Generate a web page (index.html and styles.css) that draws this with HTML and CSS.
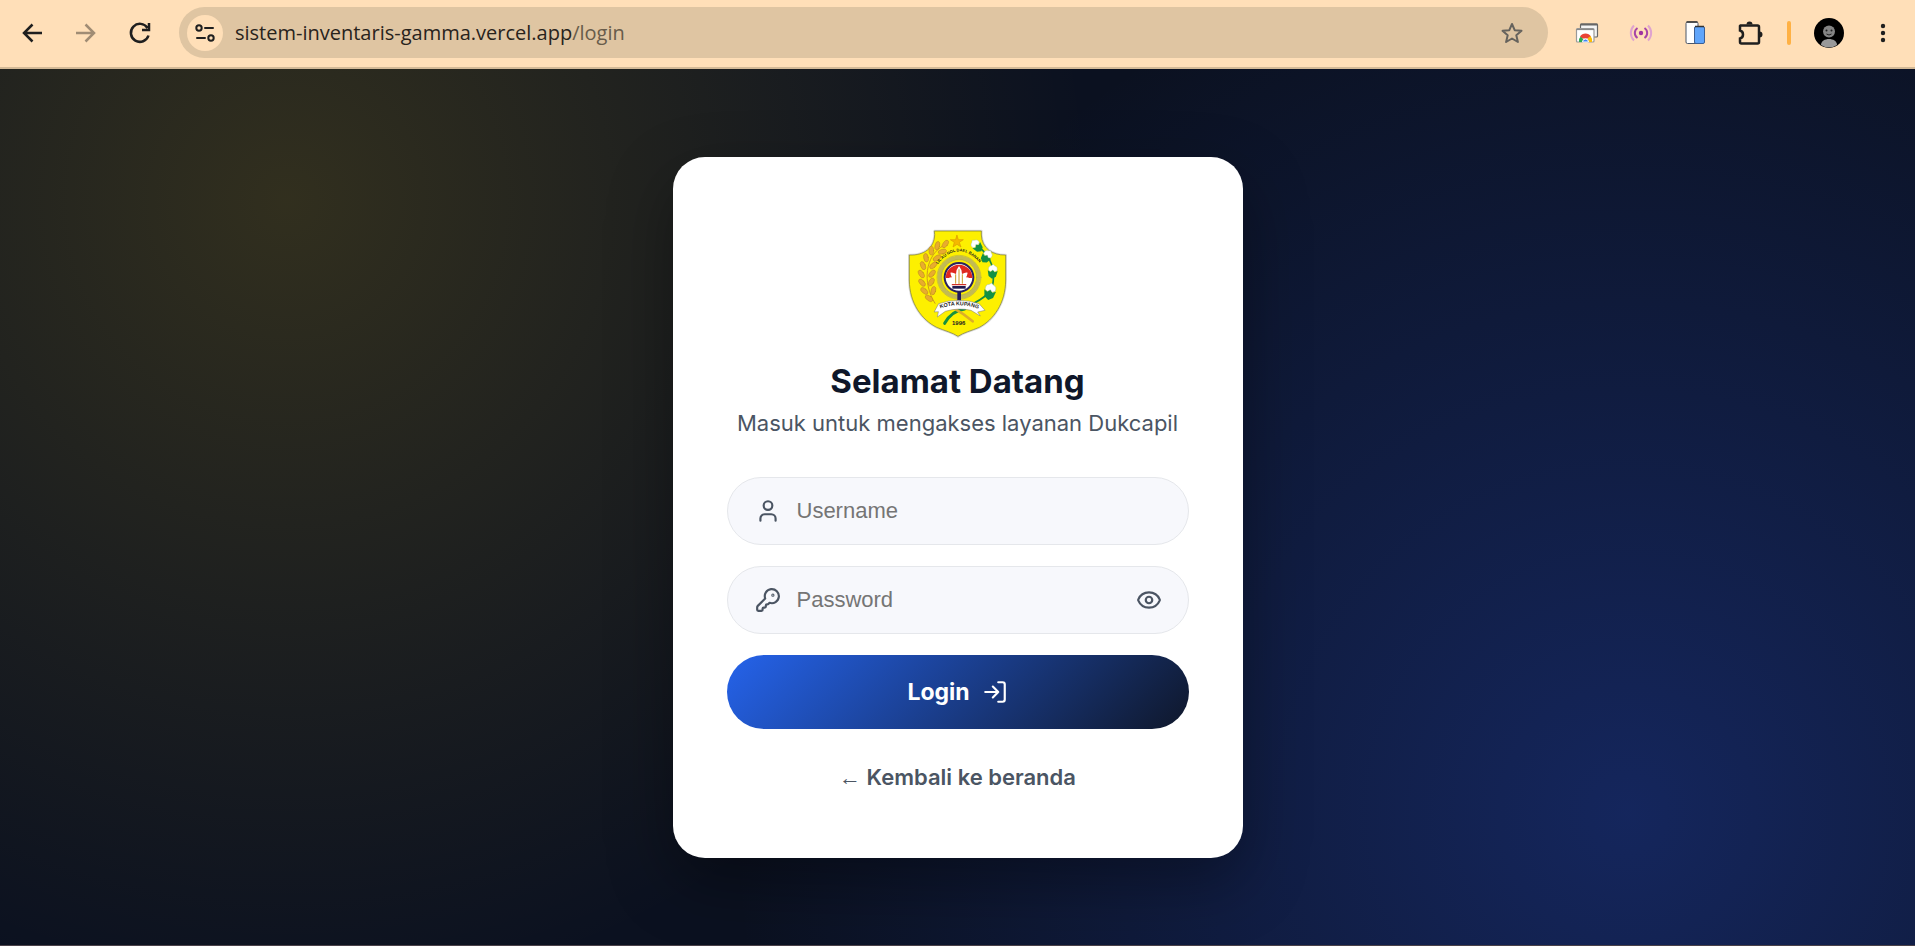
FILE: index.html
```html
<!DOCTYPE html>
<html lang="id">
<head>
    <meta charset="UTF-8">
    <meta name="viewport" content="width=device-width, initial-scale=1.0">
    <title>Login</title>
    <link rel="stylesheet" href="styles.css">
</head>
<body>
<header class="toolbar">
    <button class="tool" type="button" aria-label="Back">
        <svg width="24" height="24" viewBox="0 0 24 24"><path d="M22 12H4M12.500 3.500L4 12l8.500 8.500"/></svg>
    </button>
    <button class="tool" type="button" aria-label="Forward" disabled>
        <svg width="24" height="24" viewBox="0 0 24 24"><path d="M2 12h18M11.500 3.500L20 12l-8.500 8.500"/></svg>
    </button>
    <button class="tool" type="button" aria-label="Reload">
        <svg width="24" height="24" viewBox="0 0 24 24"><path d="M20.500 14.500a9 9 0 1 1-1-7.500M21 2v7h-7"/></svg>
    </button>
    <div class="address">
        <button class="site-info" type="button" aria-label="Site information">
            <svg width="22" height="22" viewBox="0 0 22 22"><circle cx="5" cy="6" r="2.700"/><path d="M11 6h8M3 16h8"/><circle cx="17" cy="16" r="2.700"/></svg>
        </button>
        <p class="url">sistem-inventaris-gamma.vercel.app<span>/login</span></p>
        <button class="star" type="button" aria-label="Bookmark">
            <svg width="24" height="24" viewBox="0 0 24 24"><path d="M12 3l2.700 6.200 6.800.6-5.200 4.500 1.600 6.700L12 17.500 6.100 21l1.600-6.700-5.200-4.500 6.800-.6z"/></svg>
        </button>
    </div>
    <button class="tool" type="button" aria-label="Web store">
        <svg class="colored" width="24" height="24" viewBox="0 0 24 24">
            <rect x="5.500" y="3" width="17" height="13" rx="1" fill="#f4f4f4" stroke="#666" stroke-width="1.200"/>
            <path d="M5.500 3.500h17" stroke="#666" stroke-width="2"/>
            <rect x="1.500" y="7.500" width="17.500" height="13.500" rx="1" fill="#fff" stroke="#999" stroke-width="1.200"/>
            <path d="M1.500 8.500H19" stroke="#888" stroke-width="1.200"/>
            <path d="M4 21a7 7 0 0 1 2-6l4 6z" fill="#2da94f"/>
            <path d="M5 15.500a6.500 6.500 0 0 1 11 0l-3 2H8z" fill="#ea4335"/>
            <path d="M15.500 15a7 7 0 0 1 1.500 6h-5l1-4z" fill="#fbbc05"/>
            <path d="M7.500 21a3 3 0 0 1 6 0z" fill="#4285f4" stroke="#fff" stroke-width="1"/>
        </svg>
    </button>
    <button class="tool" type="button" aria-label="Broadcast">
        <svg class="colored" width="24" height="24" viewBox="0 0 24 24">
            <circle cx="12" cy="12" r="2.200" fill="#a033a0"/>
            <path d="M8.500 7a6 6 0 0 0 0 10M15.500 7a6 6 0 0 1 0 10" stroke="#a845a8" stroke-width="2"/>
            <path d="M5 4.500a10.500 10.500 0 0 0 0 15M19 4.500a10.500 10.500 0 0 1 0 15" stroke="#dfa3cf" stroke-width="2"/>
        </svg>
    </button>
    <button class="tool" type="button" aria-label="Device view">
        <svg class="colored" width="24" height="26" viewBox="0 0 24 26">
            <rect x="3" y="2" width="12" height="21.500" rx="1.500" fill="#fff" stroke="#4b5668" stroke-width="1"/>
            <path d="M3.500 2h11" stroke="#333" stroke-width="1.500"/>
            <rect x="11.500" y="6.500" width="10" height="17" rx="1.500" fill="#60a5fa" stroke="#3b5f95" stroke-width="1"/>
            <path d="M12 6.500h9" stroke="#333" stroke-width="1.500"/>
        </svg>
    </button>
    <button class="tool" type="button" aria-label="Extensions">
        <svg width="28" height="28" viewBox="0 0 28 28"><path d="M5.500 6.500h17a1.500 1.500 0 0 1 1.500 1.500v15a1.500 1.500 0 0 1-1.500 1.500h-16a1.500 1.500 0 0 1-1.500-1.500v-3.500c4-1 4-7 0-8V7z"/><path class="solid" d="M11.500 5.500a3 3 0 0 1 6 0zM24.500 12.500a3 3 0 0 1 0 6z"/></svg>
    </button>
    <span class="divider"></span>
    <button class="tool" type="button" aria-label="Profile">
        <svg class="colored" width="30" height="30" viewBox="0 0 30 30">
            <circle cx="15" cy="15" r="15" fill="#000"/>
            <circle cx="15" cy="13.500" r="6" fill="#858585"/>
            <path d="M7 27c0-8 16-8 16 0a15 15 0 0 1-16 0z" fill="#999"/>
            <circle cx="12.500" cy="12.500" r="1" fill="#222"/>
            <circle cx="17.500" cy="12.500" r="1" fill="#222"/>
            <path d="M12.500 16q2.500 2 5 0" stroke="#222" stroke-width="1"/>
        </svg>
    </button>
    <button class="tool" type="button" aria-label="Menu">
        <svg width="24" height="24" viewBox="0 0 24 24"><g class="solid"><circle cx="12" cy="5" r="2.200"/><circle cx="12" cy="12" r="2.200"/><circle cx="12" cy="19" r="2.200"/></g></svg>
    </button>
</header>

<main class="page">
    <section class="card">
        <svg class="logo" viewBox="51 45 303 327" role="img" aria-label="Kota Kupang">
            <defs>
                <ellipse id="grain" rx="7" ry="13" fill="#e8ac2e" stroke="#b98a1a" stroke-width="1.500"/>
                <g id="cotton">
                    <path d="M-15 -2l8 4 7-5 7 5 8-4-4 17-11 7-11-7z" fill="#139044"/>
                    <path d="M-13 -3q-2-12 8-14l5-4 5 4q10 2 8 14l-7 4-6-5-6 5z" fill="#fff" stroke="#8db596" stroke-width="1"/>
                </g>
                <path id="shield" d="M134 51H274V63C276 102 306 124 347 123V198C347 268 310 318 268 340C245 350 220 356 204 367C188 356 163 350 140 340C96 318 58 268 58 198V123C103 125 133 101 134 63z"/>
            </defs>
            <use href="#shield" fill="#fdf000" stroke="#ddd" stroke-width="8"/>
            <use href="#shield" fill="#fdf000" stroke="#77772b" stroke-width="2"/>
            <path d="M201 64l4 13h15l-12 8 5 14-12-8-12 8 4-14-12-8h15z" fill="#f5b800" stroke="#d99a00"/>
            <!-- rice -->
            <path d="M160 95C105 125 96 205 135 268" fill="none" stroke="#d09a1c" stroke-width="3"/>
            <use href="#grain" transform="translate(166 90) rotate(35)"/>
            <use href="#grain" transform="translate(142 95) rotate(15)"/>
            <use href="#grain" transform="translate(157 113) rotate(75)"/>
            <use href="#grain" transform="translate(124 110) rotate(0)"/>
            <use href="#grain" transform="translate(141 132) rotate(60)"/>
            <use href="#grain" transform="translate(108 131) rotate(-10)"/>
            <use href="#grain" transform="translate(130 154) rotate(50)"/>
            <use href="#grain" transform="translate(99 155) rotate(-22)"/>
            <use href="#grain" transform="translate(126 179) rotate(40)"/>
            <use href="#grain" transform="translate(94 180) rotate(-32)"/>
            <use href="#grain" transform="translate(124 204) rotate(28)"/>
            <use href="#grain" transform="translate(96 206) rotate(-42)"/>
            <use href="#grain" transform="translate(130 230) rotate(15)"/>
            <use href="#grain" transform="translate(103 231) rotate(-50)"/>
            <use href="#grain" transform="translate(117 253) rotate(-55)"/>
            <!-- cotton -->
            <path d="M258 91Q326 142 306 222Q284 261 204 286" fill="none" stroke="#168c42" stroke-width="5"/>
            <use href="#cotton" transform="translate(260 95) rotate(-40)"/>
            <use href="#cotton" transform="translate(290 127) rotate(35)"/>
            <use href="#cotton" transform="translate(308 172) rotate(5)"/>
            <use href="#cotton" transform="translate(300 232) rotate(12) scale(1.200)"/>
            <circle cx="207" cy="190" r="59" fill="none" stroke="#c2ba55" stroke-width="12" stroke-dasharray="7 7"/>
            <circle cx="207" cy="190" r="53" fill="none" stroke="#a6a456" stroke-width="2"/>
            <circle cx="207" cy="190" r="66" fill="none" stroke="#b7b04c" stroke-width="2"/>
            <path id="motto" d="M143 151Q207 73 273 151" fill="none"/>
            <text class="motto"><textPath href="#motto">LIL AU NOL DAEL BANAN</textPath></text>
            <circle cx="207" cy="190" r="43" fill="#fff" stroke="#29235f" stroke-width="6"/>
            <path d="M167 192a40 40 0 0 1 80 0z" fill="#df2920"/>
            <path d="M207 156q10 12 9 24q10-6 17-4q-2 10-5 14q8 0 12 4q-6 16-18 18h-30q-12-2-18-18q4-4 12-4q-3-4-5-14q7-2 17 4q-1-12 9-24z" fill="#fff"/>
            <path d="M207 167v43M197 182v26M217 182v26" stroke="#c99825" stroke-width="3"/>
            <path d="M187 216h40v8h-40z" fill="#1f194f"/>
            <path d="M187 212h40" stroke="#cf302a" stroke-width="4"/>
            <path d="M202 234h11v30h-11z" fill="#211b58"/>
            <path d="M164 328q20-37 60-43" fill="none" stroke="#16913e" stroke-width="9"/>
            <path d="M192 283q28 15 56 39" fill="none" stroke="#dcae28" stroke-width="8"/>
            <path d="M133 293l13-24q60-20 121 0l18 20-22 5 8 12-28-17q-38-9-77 3l-24 17 3-15z" fill="#fff" stroke="#777" stroke-width="1.500"/>
            <path id="ribbon" d="M151 283Q207 264 263 284" fill="none"/>
            <text class="ribbon-text"><textPath href="#ribbon">KOTA KUPANG</textPath></text>
            <text class="year" x="206" y="334">1996</text>
        </svg>
        <h1>Selamat Datang</h1>
        <p class="subtitle">Masuk untuk mengakses layanan Dukcapil</p>

        <form class="form">
            <div class="field">
                <label for="username">
                    <svg width="26" height="26" viewBox="0 0 24 24"><circle cx="12" cy="7" r="4"/><path d="M19 21v-2a4 4 0 0 0-4-4H9a4 4 0 0 0-4 4v2"/></svg>
                </label>
                <input type="text" id="username" name="username" placeholder="Username" aria-label="Username">
            </div>
            <div class="field">
                <label for="password">
                    <svg width="26" height="26" viewBox="0 0 24 24"><path d="M2.586 17.414A2 2 0 0 0 2 18.828V21a1 1 0 0 0 1 1h3a1 1 0 0 0 1-1v-1a1 1 0 0 1 1-1h1a1 1 0 0 0 1-1v-1a1 1 0 0 1 1-1h.172a2 2 0 0 0 1.414-.586l.814-.814a6.500 6.500 0 1 0-4-4z"/><circle cx="16.500" cy="7.500" r=".5"/></svg>
                </label>
                <input type="password" id="password" name="password" placeholder="Password" aria-label="Password">
                <button class="show" type="button" aria-label="Tampilkan password">
                    <svg width="26" height="26" viewBox="0 0 24 24"><path d="M2.062 12.348a1 1 0 0 1 0-.696 10.750 10.750 0 0 1 19.876 0 1 1 0 0 1 0 .696 10.750 10.750 0 0 1-19.876 0"/><circle cx="12" cy="12" r="3"/></svg>
                </button>
            </div>
            <button class="login" type="submit">
                Login
                <svg width="26" height="26" viewBox="0 0 24 24"><path d="M15 3h4a2 2 0 0 1 2 2v14a2 2 0 0 1-2 2h-4M10 17l5-5-5-5M15 12H3"/></svg>
            </button>
        </form>
        <a class="back" href="/"><span>←</span> Kembali ke beranda</a>
    </section>
</main>
</body>
</html>
```
FILE: styles.css
```css
*{
    margin: 0;
    padding: 0;
    box-sizing: border-box;
}
body{
    min-height: 100vh;
    display: flex;
    flex-direction: column;
    font-family: Inter, "Liberation Sans", sans-serif;
    background-color: #0b1120;
}
button{
    border: none;
    background: none;
    cursor: pointer;
}
svg{
    display: block;
    fill: none;
    stroke: currentColor;
    stroke-width: 2;
    stroke-linecap: round;
    stroke-linejoin: round;
}

/* browser bar */
.toolbar{
    display: flex;
    align-items: center;
    gap: 12px;
    height: 69px;
    padding: 0 11px 2px;
    background-color: #ffdfb8;
    border-bottom: 2px solid #d3b996;
    color: #1f1f1f;
}
.tool{
    display: flex;
    flex: none;
    justify-content: center;
    align-items: center;
    width: 42px;
    height: 42px;
    color: #1f1f1f;
}
.tool svg{
    stroke-width: 2.5;
    stroke-linecap: butt;
    stroke-linejoin: miter;
}
.tool .colored{
    stroke: none;
}
.tool .solid{
    fill: #1f1f1f;
    stroke: none;
}
.tool:disabled{
    color: #a08c74;
}
.address{
    display: flex;
    flex: 1;
    align-items: center;
    height: 51px;
    margin: 0 6px;
    padding: 0 24px 0 8px;
    border-radius: 26px;
    background-color: #dfc5a2;
}
.site-info{
    display: flex;
    justify-content: center;
    align-items: center;
    width: 36px;
    height: 36px;
    border-radius: 50%;
    background-color: #ffdfb8;
    color: #1f1f1f;
}
.url{
    flex: 1;
    margin-left: 12px;
    font-family: "Open Sans", "Noto Sans", sans-serif;
    font-size: 20px;
    line-height: 28px;
    color: #28231c;
}
.url span{
    color: #685c4b;
}
.star{
    color: #66635d;
}
.divider{
    width: 4px;
    height: 24px;
    margin: 0 5px;
    border-radius: 2px;
    background-color: #ffb144;
}

/* login page */
.page{
    flex: 1;
    display: flex;
    justify-content: center;
    align-items: center;
    padding: 24px;
    border-bottom: 1px solid #4a4148;
    background: radial-gradient(circle at 15% 15%, rgba(250, 204, 21, 0.16), transparent 45%) no-repeat,
                radial-gradient(circle at 85% 85%, rgba(37, 75, 200, 0.36), transparent 50%) no-repeat,
                #0b1120;
}
.card{
    display: flex;
    flex-direction: column;
    align-items: center;
    width: 100%;
    max-width: 570px;
    padding: 72px 54px 64px;
    border-radius: 32px;
    background-color: #fff;
    box-shadow: 0 24px 64px rgba(0, 0, 0, 0.35);
}
.logo{
    width: 101px;
    height: 109px;
    stroke: none;
}
.motto,
.ribbon-text,
.year{
    font-family: "Liberation Sans", sans-serif;
    font-weight: bold;
    fill: #222;
}
.motto{
    font-size: 12px;
}
.ribbon-text{
    font-size: 16px;
}
.year{
    font-size: 18px;
    text-anchor: middle;
}
.card h1{
    margin-top: 21px;
    font-size: 33px;
    line-height: 44px;
    font-weight: 700;
    color: #0f172a;
}
.subtitle{
    margin-top: 4px;
    font-size: 22px;
    line-height: 32px;
    color: #4b5563;
}
.form{
    display: flex;
    flex-direction: column;
    gap: 21px;
    width: 100%;
    margin-top: 38px;
}
.field{
    display: flex;
    align-items: center;
    gap: 16px;
    height: 68px;
    padding: 0 26px 0 27px;
    border: 1px solid #e5e7eb;
    border-radius: 34px;
    background-color: #f7f8fc;
    color: #4b5563;
}
.field input{
    flex: 1;
    min-width: 0;
    border: none;
    outline: none;
    background: none;
    font-family: "Liberation Sans", Arial, sans-serif;
    font-size: 22px;
    color: #111827;
}
.field input::placeholder{
    color: #757575;
}
.show{
    color: #4b5563;
}
.login{
    display: flex;
    justify-content: center;
    align-items: center;
    gap: 12px;
    height: 74px;
    border-radius: 37px;
    background: linear-gradient(135deg, #2563eb, #0f172a);
    font-family: inherit;
    font-size: 23px;
    font-weight: 700;
    color: #fff;
}
.back{
    margin-top: 32px;
    font-size: 22px;
    line-height: 32px;
    font-weight: 600;
    color: #4b5563;
    text-decoration: none;
}
.back span{
    font-family: "Liberation Sans", sans-serif;
    font-weight: 400;
}
```
